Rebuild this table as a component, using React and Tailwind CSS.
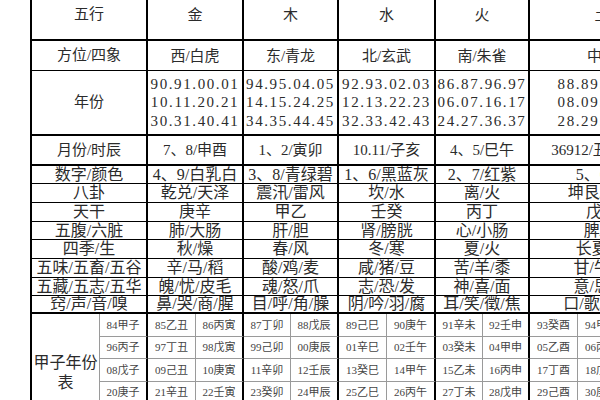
// 五行对照表
const FONT = { fontFamily: '"Liberation Serif", "Noto Sans CJK SC", serif' };

const ROWS = [
  { label: "五行", cells: ["金", "木", "水", "火", "土"], h: "h-[51px]", b: "border-b-2", t: "text-[15px]" },
  { label: "方位/四象", cells: ["西/白虎", "东/青龙", "北/玄武", "南/朱雀", "中央"], h: "h-[30px]", b: "border-b", t: "text-[15px]" },
  {
    label: "年份",
    cells: [
      "90.91.00.01\n10.11.20.21\n30.31.40.41",
      "94.95.04.05\n14.15.24.25\n34.35.44.45",
      "92.93.02.03\n12.13.22.23\n32.33.42.43",
      "86.87.96.97\n06.07.16.17\n24.27.36.37",
      "88.89.98.99\n08.09.18.19\n28.29.38.39",
    ],
    h: "h-[65px]",
    b: "border-b-2",
    t: "text-[15px]",
    years: true,
  },
  { label: "月份/时辰", cells: ["7、8/申酉", "1、2/寅卯", "10.11/子亥", "4、5/巳午", "36912/丑辰未戌"], h: "h-[30px]", b: "border-b-2", t: "text-[15px]" },
  { label: "数字/颜色", cells: ["4、9/白乳白", "3、8/青绿碧", "1、6/黑蓝灰", "2、7/红紫", "5、0/黄"], h: "h-[18px]", b: "border-b", t: "text-[16px]" },
  { label: "八卦", cells: ["乾兑/天泽", "震汛/雷风", "坎/水", "离/火", "坤艮/地山"], h: "h-[19px]", b: "border-b", t: "text-[16px]" },
  { label: "天干", cells: ["庚辛", "甲乙", "壬癸", "丙丁", "戊己"], h: "h-[19px]", b: "border-b", t: "text-[16px]" },
  { label: "五腹/六脏", cells: ["肺/大肠", "肝/胆", "肾/膀胱", "心/小肠", "脾/胃"], h: "h-[18px]", b: "border-b", t: "text-[16px]" },
  { label: "四季/生", cells: ["秋/燥", "春/风", "冬/寒", "夏/火", "长夏/湿"], h: "h-[19px]", b: "border-b", t: "text-[16px]" },
  { label: "五味/五畜/五谷", cells: ["辛/马/稻", "酸/鸡/麦", "咸/猪/豆", "苦/羊/黍", "甘/牛/稷"], h: "h-[19px]", b: "border-b", t: "text-[16px]" },
  { label: "五藏/五志/五华", cells: ["魄/忧/皮毛", "魂/怒/爪", "志/恐/发", "神/喜/面", "意/思/唇"], h: "h-[18px]", b: "border-b", t: "text-[16px]" },
  { label: "窍/声/音/嗅", cells: ["鼻/哭/商/腥", "目/呼/角/臊", "阴/吟/羽/腐", "耳/笑/徵/焦", "口/歌/宫/香"], h: "h-[18px]", b: "border-b-2", t: "text-[16px]" },
];

const STEMS = "甲乙丙丁戊己庚辛壬癸";
const BRANCHES = "子丑寅卯辰巳午未申酉戌亥";
const JZ_HEIGHTS = ["h-[23px]", "h-[22px]", "h-[23px]", "h-[22px]", "h-[23px]"];
// 主列分界处（金木水火土之间）用粗黑线
const THICK = [0, 2, 4, 6, 8];

function jiazi(k) {
  const y = String((84 + k) % 100).padStart(2, "0");
  return y + STEMS[k % 10] + BRANCHES[k % 12];
}

function MainRow({ row }) {
  const base = `${row.h} ${row.b} border-black flex items-center justify-center text-center whitespace-nowrap overflow-hidden`;
  return (
    <>
      <div className={`col-span-2 border-r-2 ${base} ${row.t}`}>{row.label}</div>
      {row.cells.map((c, i) => (
        <div
          key={i}
          className={`${i === 4 ? "col-span-3" : "col-span-2 border-r-2"} ${base} ${row.t} ${
            row.years ? "whitespace-pre-line leading-[18.5px] tracking-[1.6px]" : "leading-[18px]"
          }`}
        >
          {c}
        </div>
      ))}
    </>
  );
}

export default function App() {
  return (
    <div className="w-[600px] h-[400px] overflow-hidden bg-white pl-[30px] text-[#2b2b2b]" style={FONT}>
      <div className="-mt-[10px] w-[680px] border-l-2 border-black grid grid-cols-[68px_48px_48px_48px_47px_48px_48px_49px_47px_47px_48px_48px_48px]">
        {ROWS.map((r, i) => (
          <MainRow key={i} row={r} />
        ))}

        {/* 甲子年份表 */}
        <div className="row-span-5 border-r border-[#9a9a9a] flex items-center justify-center text-center text-[16px] leading-[20px] pt-[4px]">
          甲子年份
          <br />
          表
        </div>
        {JZ_HEIGHTS.map((h, r) =>
          Array.from({ length: 12 }, (_, c) => (
            <div
              key={`${r}-${c}`}
              className={`${h} border-b border-b-[#9a9a9a] flex items-center justify-center text-[11px] text-[#444] whitespace-nowrap ${
                THICK.includes(c) ? "border-r-2 border-r-black" : "border-r border-r-[#9a9a9a]"
              }`}
            >
              {jiazi(r * 12 + c)}
            </div>
          ))
        )}
      </div>
    </div>
  );
}
